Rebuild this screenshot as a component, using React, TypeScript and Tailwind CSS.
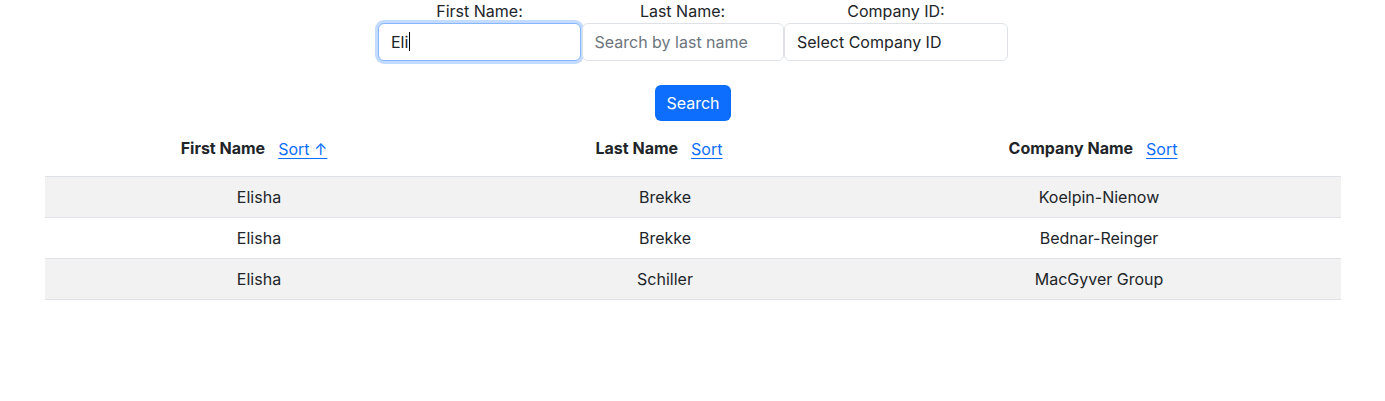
import React from "react";

export default function App() {
  const rows = [
    ["Elisha", "Brekke", "Koelpin-Nienow"],
    ["Elisha", "Brekke", "Bednar-Reinger"],
    ["Elisha", "Schiller", "MacGyver Group"],
  ];
  return (
    <div
      className="w-[1385px] h-[401px] bg-white text-[#212529] text-[16px] leading-[24px]"
      style={{ fontFamily: "Inter, 'Noto Sans', sans-serif" }}
    >
      <div className="flex justify-center pl-[1px]">
        <div className="flex flex-col items-center w-[203px]">
          <label className="h-[23px] leading-[22px]">First Name:</label>
          <div className="w-[203px] h-[38px] rounded-[6px] border border-[#86b7fe] shadow-[0_0_0_3px_rgba(13,110,253,0.25)] flex items-center px-3 pb-[1px] bg-white">
            <span>Eli</span>
            <span className="inline-block w-[1px] h-[19px] bg-black ml-[1px]" />
          </div>
        </div>
        <div className="flex flex-col items-center w-[203px]">
          <label className="h-[23px] leading-[22px]">Last Name:</label>
          <div className="w-[202px] h-[38px] rounded-[6px] border border-[#dee2e6] flex items-center px-3 pb-[1px] bg-white text-[#6c757d]">
            Search by last name
          </div>
        </div>
        <div className="flex flex-col items-center w-[224px]">
          <label className="h-[23px] leading-[22px]">Company ID:</label>
          <div className="w-[224px] h-[38px] rounded-[6px] border border-[#dee2e6] flex items-center px-3 pb-[1px] bg-white">
            Select Company ID
          </div>
        </div>
      </div>
      <div className="flex justify-center mt-[24px] pl-[1px]">
        <button className="w-[76px] h-[36px] rounded-[6px] bg-[#0d6efd] text-white leading-[34px]">
          Search
        </button>
      </div>
      <div className="mx-[45px]">
        <table className="w-[1296px] border-collapse">
          <thead>
            <tr className="border-b border-[#dee2e6]">
              <th className="w-[428px] h-[55px] align-middle font-bold text-center">
                <span className="inline-flex items-baseline gap-[13px] -ml-[10px]">
                  <span>First Name</span>
                  <a className="font-normal text-[#0d6efd] underline underline-offset-[3px] translate-y-[1px]">Sort ↑</a>
                </span>
              </th>
              <th className="w-[384px] font-bold text-center">
                <span className="inline-flex items-baseline gap-[13px] -ml-[12px]">
                  <span>Last Name</span>
                  <a className="font-normal text-[#0d6efd] underline underline-offset-[3px] translate-y-[1px]">Sort</a>
                </span>
              </th>
              <th className="w-[484px] font-bold text-center">
                <span className="inline-flex items-baseline gap-[13px] -ml-[12px]">
                  <span>Company Name</span>
                  <a className="font-normal text-[#0d6efd] underline underline-offset-[3px] translate-y-[1px]">Sort</a>
                </span>
              </th>
            </tr>
          </thead>
          <tbody>
            {rows.map((r, i) => (
              <tr
                key={i}
                className={
                  "border-b border-[#dee2e6] " +
                  (i % 2 === 0 ? "bg-[#f2f2f2]" : "bg-white")
                }
              >
                {r.map((c, j) => (
                  <td key={j} className="h-[41px] py-2 text-center">
                    {c}
                  </td>
                ))}
              </tr>
            ))}
          </tbody>
        </table>
      </div>
    </div>
  );
}
